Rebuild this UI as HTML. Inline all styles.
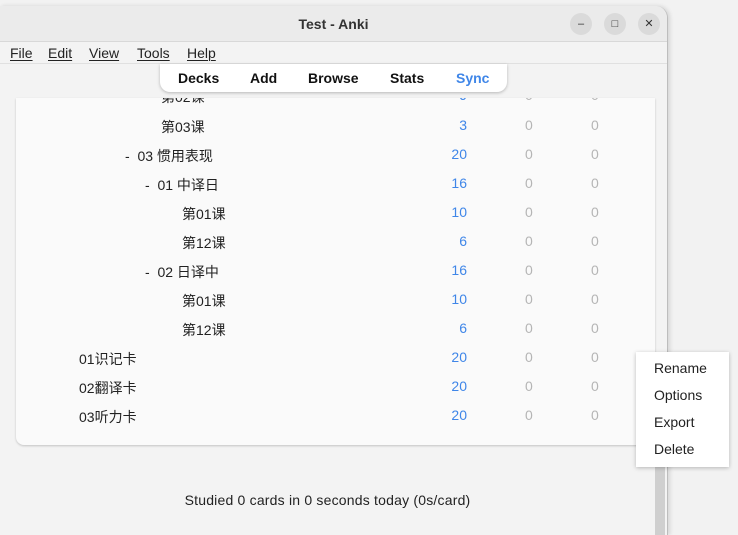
<!DOCTYPE html>
<html><head><meta charset="utf-8"><style>
*{margin:0;padding:0;box-sizing:border-box}
html,body{width:738px;height:535px;overflow:hidden}
body{background:#f2f2f2;position:relative;font-family:"Liberation Sans","Noto Sans CJK SC",sans-serif;font-size:14px;color:#222}
.win{position:absolute;left:0;top:6px;width:668px;height:529px;background:#f3f3f3;border-right:1px solid #bdbdbd;border-top-right-radius:12px;box-shadow:2px 0 4px rgba(0,0,0,.12)}
.title{position:absolute;left:0;top:6px;width:667px;height:36px;background:#ebebeb;border-bottom:1px solid #d8d8d8;border-top-right-radius:12px;text-align:center;line-height:36px;font-weight:bold;font-size:14px;color:#333}
.btn{position:absolute;top:7px;width:22px;height:22px;border-radius:11px;background:#dadada;font-size:11px;font-weight:normal;text-align:center;line-height:22px;color:#333}
.menu{position:absolute;left:0;top:42px;width:667px;height:22px;border-bottom:1px solid #e0e0e0}
.menu span{position:absolute;top:3px;font-size:14px;text-decoration:underline;text-decoration-thickness:1px;text-underline-offset:2px}
.tb{position:absolute;left:160px;top:64px;width:347px;height:28px;background:#fff;border-radius:0 0 10px 10px;box-shadow:0 1px 3px rgba(0,0,0,.25)}
.tb span{position:absolute;top:6px;font-weight:bold;font-size:14px;color:#111}
.card{position:absolute;left:16px;top:98px;width:639px;height:347px;background:#fafafa;border-radius:0 0 8px 8px;box-shadow:0 1px 2px rgba(0,0,0,.2)}
.clip{position:absolute;left:0;top:98px;width:667px;height:350px;overflow:hidden}
.r{position:absolute;left:0;width:667px;height:29px}
.r .n{position:absolute;font-size:14px}
.b{position:absolute;right:200px;color:#3f86e8}
.z1{position:absolute;left:525px;color:#b5b5b5}
.z2{position:absolute;left:591px;color:#b5b5b5}
.pop{position:absolute;left:636px;top:352px;width:93px;height:115px;background:#fff;box-shadow:0 1px 4px rgba(0,0,0,.25)}
.pop div{position:absolute;left:18px;font-size:14px;color:#222}
</style></head><body>
<div class="win"></div>
<div class="title">Test - Anki
<div class="btn" style="left:570px">–</div><div class="btn" style="left:604px">□</div><div class="btn" style="left:638px">✕</div></div>
<div class="menu"><span style="left:10px">File</span><span style="left:48px">Edit</span><span style="left:89px">View</span><span style="left:137px">Tools</span><span style="left:187px">Help</span></div>
<div class="card"></div>
<div style="position:absolute;left:655px;top:455px;width:10px;height:80px;background:#cfcfcf"></div>
<div class="clip">
<div class="r" style="top:-11px"><span class="n" style="left:161px">第02课</span><span class="b">9</span><span class="z1">0</span><span class="z2">0</span></div>
<div class="r" style="top:19px"><span class="n" style="left:161px">第03课</span><span class="b">3</span><span class="z1">0</span><span class="z2">0</span></div>
<div class="r" style="top:48px"><span class="n" style="left:125px">-&nbsp; 03 惯用表现</span><span class="b">20</span><span class="z1">0</span><span class="z2">0</span></div>
<div class="r" style="top:77px"><span class="n" style="left:145px">-&nbsp; 01 中译日</span><span class="b">16</span><span class="z1">0</span><span class="z2">0</span></div>
<div class="r" style="top:106px"><span class="n" style="left:182px">第01课</span><span class="b">10</span><span class="z1">0</span><span class="z2">0</span></div>
<div class="r" style="top:135px"><span class="n" style="left:182px">第12课</span><span class="b">6</span><span class="z1">0</span><span class="z2">0</span></div>
<div class="r" style="top:164px"><span class="n" style="left:145px">-&nbsp; 02 日译中</span><span class="b">16</span><span class="z1">0</span><span class="z2">0</span></div>
<div class="r" style="top:193px"><span class="n" style="left:182px">第01课</span><span class="b">10</span><span class="z1">0</span><span class="z2">0</span></div>
<div class="r" style="top:222px"><span class="n" style="left:182px">第12课</span><span class="b">6</span><span class="z1">0</span><span class="z2">0</span></div>
<div class="r" style="top:251px"><span class="n" style="left:79px">01识记卡</span><span class="b">20</span><span class="z1">0</span><span class="z2">0</span></div>
<div class="r" style="top:280px"><span class="n" style="left:79px">02翻译卡</span><span class="b">20</span><span class="z1">0</span><span class="z2">0</span></div>
<div class="r" style="top:309px"><span class="n" style="left:79px">03听力卡</span><span class="b">20</span><span class="z1">0</span><span class="z2">0</span></div>
</div>
<div class="tb"><span style="left:18px">Decks</span><span style="left:90px">Add</span><span style="left:148px">Browse</span><span style="left:230px">Stats</span><span style="left:296px;color:#3f86e8">Sync</span></div>
<div style="position:absolute;left:0;width:655px;top:492px;text-align:center;font-size:14px;color:#222;letter-spacing:0.2px">Studied 0 cards in 0 seconds today (0s/card)</div>
<div class="pop"><div style="top:8px">Rename</div><div style="top:35px">Options</div><div style="top:62px">Export</div><div style="top:89px">Delete</div></div>
</body></html>
